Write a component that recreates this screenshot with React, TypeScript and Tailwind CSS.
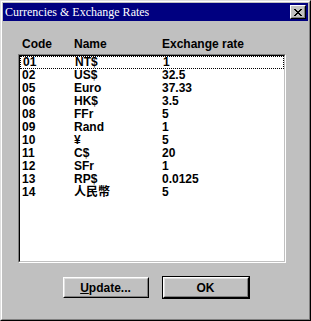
const rates = [
  { code: "01", name: "NT$", rate: "1" },
  { code: "02", name: "US$", rate: "32.5" },
  { code: "05", name: "Euro", rate: "37.33" },
  { code: "06", name: "HK$", rate: "3.5" },
  { code: "08", name: "FFr", rate: "5" },
  { code: "09", name: "Rand", rate: "1" },
  { code: "10", name: "¥", rate: "5" },
  { code: "11", name: "C$", rate: "20" },
  { code: "12", name: "SFr", rate: "1" },
  { code: "13", name: "RP$", rate: "0.0125" },
  { code: "14", name: "人民幣", rate: "5" },
]

const uiFont = "font-['Liberation_Sans','Noto_Sans_CJK_TC',sans-serif]"

function Win95Button({ children, isDefault }: { children: React.ReactNode; isDefault?: boolean }) {
  return (
    <button
      className={`h-[23px] w-[88px] ${isDefault ? "border border-black" : "border border-transparent"} p-0 text-[12px] font-bold text-black ${uiFont}`}
    >
      <div className="h-full border border-t-white border-l-white border-r-black border-b-black">
        <div className="flex h-full items-center justify-center border border-t-[#dfdfdf] border-l-[#dfdfdf] border-r-[#808080] border-b-[#808080] bg-[#c0c0c0]">
          {children}
        </div>
      </div>
    </button>
  )
}

export default function App() {
  return (
    <div className="h-[321px] w-[311px] border border-t-[#dfdfdf] border-l-[#dfdfdf] border-r-black border-b-black">
      <div className="flex h-full flex-col border border-t-white border-l-white border-r-[#808080] border-b-[#808080] bg-[#c0c0c0] p-px">
        {/* title bar */}
        <div className="flex h-[18px] items-center justify-between bg-[#000080] px-[2px]">
          <span className="font-['Liberation_Serif',serif] text-[12px] leading-none text-white">
            Currencies &amp; Exchange Rates
          </span>
          <div className="h-[14px] w-[16px] border border-t-white border-l-white border-r-black border-b-black">
            <div className="flex h-full items-center justify-center border border-t-[#c0c0c0] border-l-[#c0c0c0] border-r-[#808080] border-b-[#808080] bg-[#c0c0c0]">
              <svg width="8" height="7" viewBox="0 0 8 7" shapeRendering="crispEdges">
                <path
                  d="M0 0h2v1H0zM6 0h2v1H6zM1 1h2v1H1zM5 1h2v1H5zM2 2h4v1H2zM3 3h2v1H3zM2 4h4v1H2zM1 5h2v1H1zM5 5h2v1H5zM0 6h2v1H0zM6 6h2v1H6z"
                  fill="black"
                />
              </svg>
            </div>
          </div>
        </div>

        {/* body */}
        <div className={`flex flex-1 flex-col px-[15px] pt-[16px] ${uiFont}`}>
          <div className="grid h-[14px] grid-cols-[52px_88px_1fr] pl-[4px] text-[12px] font-bold leading-[14px] text-black">
            <span>Code</span>
            <span>Name</span>
            <span>Exchange rate</span>
          </div>
          <div className="mt-[3px] h-[209px] w-[268px] border border-t-[#808080] border-l-[#808080] border-r-white border-b-white">
            <div className="h-full border border-t-black border-l-black border-r-[#c0c0c0] border-b-[#c0c0c0] bg-white">
              {rates.map((r, i) => (
                <div
                  key={r.code}
                  className={`grid h-[13px] grid-cols-[52px_88px_1fr] pl-[2px] text-[12px] font-bold leading-[13px] text-black ${
                    i === 0 ? "border border-dotted border-black pl-[1px]" : ""
                  }`}
                >
                  <span className={i === 0 ? "-mt-px" : ""}>{r.code}</span>
                  <span className={i === 0 ? "-mt-px" : ""}>{r.name}</span>
                  <span className={i === 0 ? "-mt-px" : ""}>{r.rate}</span>
                </div>
              ))}
            </div>
          </div>

          <div className="mt-[13px] flex justify-center gap-[12px]">
            <Win95Button>
              <span>
                <span className="underline">U</span>pdate...
              </span>
            </Win95Button>
            <Win95Button isDefault>OK</Win95Button>
          </div>
        </div>
      </div>
    </div>
  )
}
